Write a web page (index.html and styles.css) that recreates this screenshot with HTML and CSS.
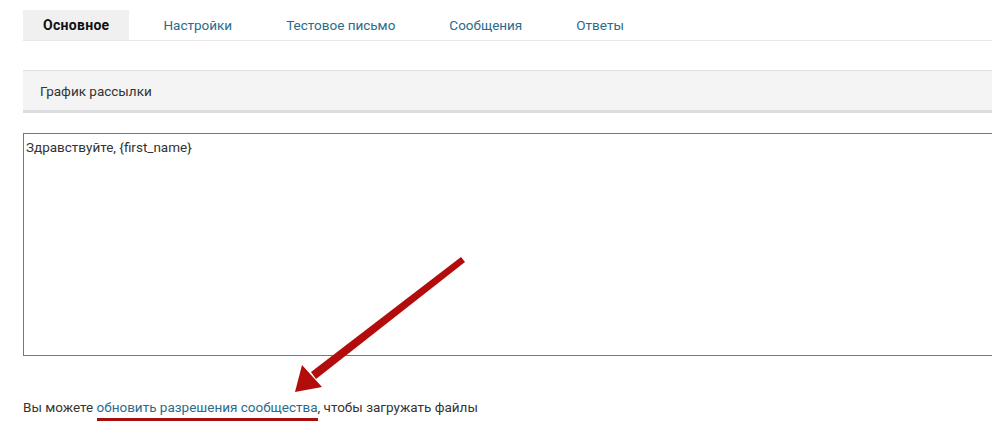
FILE: index.html
```html
<!DOCTYPE html>
<html lang="ru">

<head>
    <meta charset="UTF-8">
    <meta name="viewport" content="width=device-width, initial-scale=1.0">
    <title>Рассылка</title>
    <link rel="stylesheet" href="styles.css">
</head>

<body>
    <div class="page">
        <ul class="tabs">
            <li class="tab active">Основное</li>
            <li class="tab">Настройки</li>
            <li class="tab">Тестовое письмо</li>
            <li class="tab">Сообщения</li>
            <li class="tab">Ответы</li>
        </ul>

        <div class="section">График рассылки</div>

        <div class="editor">Здравствуйте, {first_name}</div>

        <p class="note">Вы можете <a href="#" class="link">обновить разрешения сообщества</a>, чтобы загружать файлы</p>

        <svg class="arrow" width="992" height="429" viewBox="0 0 992 429">
            <polygon points="461,257 465,262 316,379 311,372" fill="#b30c0c" />
            <polygon points="295,392 302,365 322,387" fill="#b30c0c" />
        </svg>
    </div>
</body>

</html>
```

FILE: styles.css
```css
body {
    margin: 0;
    font-family: Roboto, "Open Sans", sans-serif;
    color: #222;
    overflow: hidden;
}

.page {
    position: relative;
    padding: 10px 0 0 23px;
    height: 419px;
}

.tabs {
    display: flex;
    margin: 0;
    padding: 0;
    list-style: none;
    border-bottom: 1px solid #e8e8e8;
}

.tab {
    padding: 0 20px;
    margin-right: 14px;
    height: 30px;
    line-height: 30px;
    font-size: 13.5px;
    color: #2a6b8c;
}

.tab.active {
    background-color: #f0f0f0;
    color: #111;
    font-weight: bold;
    font-size: 14px;
    letter-spacing: 0.3px;
}

.section {
    margin-top: 29px;
    width: 1000px;
    height: 43px;
    line-height: 40px;
    padding-left: 17px;
    background-color: #f4f4f4;
    border-top: 1px solid #dedede;
    border-bottom: 3px solid #dcdcdc;
    font-size: 13.5px;
    color: #333;
    box-sizing: border-box;
}

.editor {
    margin-top: 20px;
    width: 1000px;
    height: 223px;
    border: 1px solid #777;
    padding: 5px 2px;
    box-sizing: border-box;
    font-size: 13.5px;
    color: #333;
}

.note {
    margin: 43px 0 0;
    font-size: 13.5px;
    color: #333;
}

.link {
    color: #2a6b8c;
    text-decoration: none;
    padding-bottom: 3px;
    border-bottom: 3px solid #a50f0f;
}

.arrow {
    position: absolute;
    top: 0;
    left: 0;
    pointer-events: none;
}
```
